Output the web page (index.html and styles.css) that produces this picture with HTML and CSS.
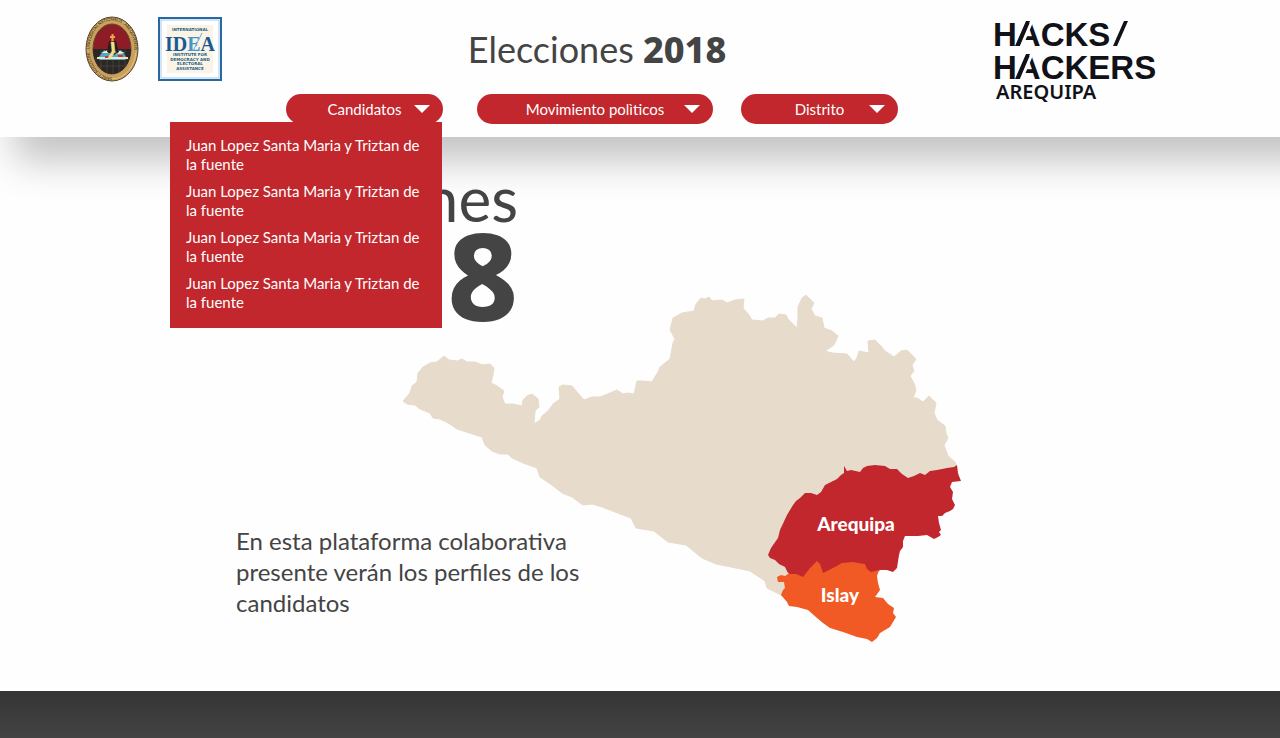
FILE: index.html
```html
<!DOCTYPE html>
<html lang="es">
<head>
<meta charset="utf-8">
<meta name="viewport" content="width=device-width, initial-scale=1">
<title>Elecciones 2018</title>
<link rel="stylesheet" href="styles.css">
</head>
<body>
<header class="site-header">
  <div class="partners">
    <svg class="seal" viewBox="0 0 54 66" role="img" aria-label="Universidad">
      <defs><path id="ring" d="M27 61.500A22.500 28.500 0 1 1 27.100 61.500"/></defs>
      <ellipse cx="27" cy="33" rx="26" ry="32" fill="#c9a15a" stroke="#5b4630"/>
      <ellipse cx="27" cy="33" rx="24" ry="30" fill="none" stroke="#e3c486"/>
      <text class="seal-text"><textPath href="#ring">SANCTI AUGUSTINI · UNIVERSITAS NATIONALIS · AREQUIPENSIS ·</textPath></text>
      <ellipse cx="27" cy="33" rx="19" ry="25" fill="#8e1c27" stroke="#5b4630"/>
      <path d="M8 33h38A19 25 0 0 1 8 33z" fill="#2a2827"/>
      <path d="M16 34v19M22 34v23M28 34v24M34 34v22M40 34v16M10 43h34M12 50h30" stroke="#514b46" stroke-width=".6"/>
      <path d="M13 42l6-8 6 3h5l6-3 6 8-2 2H15z" fill="#51a6ca"/>
      <path d="M12 41h31v2H12z" fill="#efe6bd"/>
      <path d="M16 37l7-3v3zM32 34l8 3-7 1z" fill="#f7f1d6"/>
      <path d="M20 40h5v2h-5zM33 39h5v2h-5z" fill="#c63434"/>
      <path d="M22 36l2-11h7l3 11-5 3z" fill="#24211f"/>
      <path d="M26 26h3l1 10-5 7-2-1 4-7zM30 35l2 4" fill="#f6dc84" stroke="#f6dc84" stroke-width=".5"/>
      <path d="M27.500 18v7M25 21h5" stroke="#f5a04a" stroke-width="2"/>
    </svg>
    <svg class="idea" viewBox="0 0 64 64" role="img" aria-label="International IDEA">
      <rect x="1" y="1" width="62" height="62" fill="#fff" stroke="#2768a3" stroke-width="2"/>
      <rect x="3" y="3" width="58" height="58" fill="none" stroke="#a9c9e2"/>
      <rect x="9" y="8" width="46" height="48" fill="#fbf4e6"/>
      <g class="idea-small">
        <text x="32" y="14">INTERNATIONAL</text>
        <text x="32" y="39">INSTITUTE FOR</text>
        <text x="32" y="44">DEMOCRACY AND</text>
        <text x="32" y="48">ELECTORAL</text>
        <text x="32" y="53">ASSISTANCE</text>
      </g>
      <text class="idea-name" x="32" y="34">ID<tspan fill="#4796c8">E</tspan>A</text>
      <path d="M35 34l9-18" stroke="#63acd4"/>
    </svg>
  </div>

  <div class="center">
    <h1 class="brand">Elecciones <strong>2018</strong></h1>
    <nav class="filters" aria-label="Filtros">
      <div class="filter">
        <button class="pill" type="button" aria-haspopup="true" aria-expanded="true" aria-controls="candidatos"><span class="pill-label">Candidatos</span><svg class="caret" viewBox="0 0 16 8" aria-hidden="true"><path d="M0 0h16L8 8z"/></svg></button>
        <ul class="menu" id="candidatos">
          <li><a href="#">Juan Lopez Santa Maria y Triztan de la fuente</a></li>
          <li><a href="#">Juan Lopez Santa Maria y Triztan de la fuente</a></li>
          <li><a href="#">Juan Lopez Santa Maria y Triztan de la fuente</a></li>
          <li><a href="#">Juan Lopez Santa Maria y Triztan de la fuente</a></li>
        </ul>
      </div>
      <button class="pill pill-wide" type="button" aria-haspopup="true"><span class="pill-label">Movimiento polìticos</span><svg class="caret" viewBox="0 0 16 8" aria-hidden="true"><path d="M0 0h16L8 8z"/></svg></button>
      <button class="pill" type="button" aria-haspopup="true"><span class="pill-label">Distrito</span><svg class="caret" viewBox="0 0 16 8" aria-hidden="true"><path d="M0 0h16L8 8z"/></svg></button>
    </nav>
  </div>

  <svg class="hacks" viewBox="0 0 166 90" role="img" aria-label="Hacks/Hackers Arequipa">
    <g class="hacks-name">
      <text x="-1" y="30">HACKS</text>
      <text x="-1" y="63">HACKERS</text>
    </g>
    <path d="M27 31L38 5M27 64L38 38" stroke="#fefefe" stroke-width="3"/>
    <path d="M21 30L32 5h4L25 30zM21 63L32 38h4L25 63zM119 30L130 5h4L123 30z" fill="#111118"/>
    <text class="hacks-city" x="2" y="83">AREQUIPA</text>
  </svg>
</header>

<main class="hero">
  <svg class="map" viewBox="403 294 558 348" role="img" aria-label="Mapa de Arequipa">
    <path fill="#e7dccb" stroke="#e7dccb" stroke-linejoin="round" d="M403 401L410 393 412 386 417 382 418 373 423 367 430 363 437 362 444 356 449 360 457 361 462 359 467 362 475 362 483 365 490 364 494 368 493 375 491 383 497 386 504 391 502 397 505 404 513 404 522 406 523 400 527 396 532 394 538 399 539 407 535 411 534 424 540 420 542 416 548 411 553 404 560 399 559 387 563 385 572 386 577 392 584 400 592 397 600 397 610 393 617 390 623 394 628 393 634 394 637 381 643 381 652 382 658 372 660 367 670 359 673 343 675 339 670 330 673 318 682 313 694 311 696 304 701 298 705 299 709 297 712 301 722 300 727 303 735 300 744 299 743 308 749 315 752 320 763 321 768 318 775 318 779 314 786 315 788 319 797 328 798 318 798 307 802 298 806 295 814 303 811 309 815 316 822 318 824 328 832 331 838 336 834 345 825 351 832 353 847 354 854 362 857 358 859 351 869 353 868 341 875 340 881 346 885 351 894 357 901 351 907 350 916 359 912 365 914 371 910 376 914 383 916 390 913 398 917 398 923 402 929 396 936 403 934 413 937 420 945 426 946 433 948 438 944 445 948 456 955 462 957 468 890 520 800 575 785 597 781 595 767 588 765 581 750 571 741 569 716 564 702 558 686 545 668 542 654 531 636 528 631 518 615 512 602 507 592 504 583 505 572 497 562 493 552 485 540 477 537 468 523 463 512 458 508 454 500 454 492 451 485 445 482 437 457 429 450 424 440 419 433 418 430 413 420 409 415 405 407 404z"/>
    <path fill="#c1272d" d="M844 466L847 471 851 470 860 472 863 468 867 466 875 465 885 466 890 469 897 469 902 474 908 478 914 476 920 473 925 475 930 471 937 470 947 468 954 467 957 465 958 473 959 476 961 481 952 482 950 487 953 492 952 499 955 505 953 509 950 511 945 513 942 516 938 516 939 523 941 530 939 532 941 535 938 537 934 539 927 535 918 536 905 536 903 541 903 547 900 551 899 555 897 568 893 572 887 570 880 570 871 578 803 583 788 573 785 567 779 564 775 560 770 558 768 555 771 548 778 538 780 530 787 515 793 505 796 501 800 498 805 493 811 493 817 495 821 492 825 485 831 482 837 479 841 475 844 473z"/>
    <path fill="#f15a24" d="M777 577L781 575 785 576 788 574 796 574 803 577 810 568 817 561 820 564 823 573 829 570 835 567 842 563 853 562 858 563 865 564 867 569 871 572 879 570 877 576 878 583 880 590 875 597 883 598 888 604 894 608 893 613 896 617 893 622 890 627 880 633 877 638 872 642 867 639 857 637 843 632 830 628 823 623 817 618 808 610 797 607 789 606 787 602 781 595 783 590 785 588 784 582 778 582z"/>
    <g class="map-labels">
      <text x="856" y="531">Arequipa</text>
      <text x="840" y="602">Islay</text>
    </g>
  </svg>
  <div class="intro">
    <h2 class="intro-title">Elecciones <strong>2018</strong></h2>
    <p class="intro-text">En esta plataforma colaborativa presente verán los perfiles de los candidatos</p>
  </div>
</main>

<footer class="site-footer"></footer>
</body>
</html>
```
FILE: styles.css
```css
:root {
  --red: #c1272d;
  --ink: #444;
}

* {
  box-sizing: border-box;
}

body {
  display: flex;
  flex-direction: column;
  min-height: 100vh;
  margin: 0;
  background: #fefefe;
  color: var(--ink);
  font-family: Lato, "Noto Sans", sans-serif;
  overflow-x: hidden;
}

.site-header {
  position: relative;
  z-index: 1;
  display: flex;
  justify-content: space-between;
  align-items: flex-start;
  padding: 16px 120px 13px 85px;
  background: #fefefe;
  box-shadow: 30px 8px 36px 16px rgba(0, 0, 0, .23);
}

.partners {
  display: flex;
  gap: 19px;
}

.seal {
  width: 54px;
  height: 66px;
}

.idea {
  width: 64px;
  height: 64px;
  margin-top: 1px;
}

.seal-text {
  font-size: 4px;
  font-weight: 700;
  fill: #4d3a22;
}

.idea-small {
  font-family: "DejaVu Sans", sans-serif;
  font-size: 4px;
  font-weight: 700;
  text-anchor: middle;
  fill: #245e80;
}

.idea-name {
  font-family: "Liberation Serif", serif;
  font-size: 20px;
  font-weight: 700;
  text-anchor: middle;
  fill: #175a94;
}

.center {
  margin-right: 32px;
}

.brand {
  margin: 11px 0 22px;
  padding-left: 10px;
  font-size: 36px;
  line-height: 44px;
  font-weight: 400;
  text-align: center;
}

.brand strong,
.intro-title strong {
  font-family: "Noto Sans", sans-serif;
  font-weight: 800;
}

.filters {
  display: grid;
  grid-template-columns: 163px auto auto;
  gap: 28px;
}

.filter {
  position: relative;
}

.pill {
  display: grid;
  grid-template-columns: 1fr auto 1fr;
  align-items: center;
  width: 157px;
  height: 30px;
  padding: 0 13px;
  border: 0;
  border-radius: 15px;
  background: var(--red);
  color: #fff;
  font: inherit;
  font-size: 15px;
  line-height: 20px;
  cursor: pointer;
}

.pill-wide {
  width: 236px;
}

.pill-label {
  grid-column: 2;
}

.caret {
  justify-self: end;
  width: 16px;
  height: 8px;
  fill: #fff;
}

.menu {
  position: absolute;
  top: 28px;
  right: 7px;
  display: grid;
  gap: 8px;
  width: 272px;
  margin: 0;
  padding: 14px 16px 16px;
  background: var(--red);
  list-style: none;
  font-size: 15px;
  line-height: 19px;
}

.menu a {
  display: block;
  color: #fff;
  text-decoration: none;
}

.hacks {
  width: 166px;
  height: 90px;
}

.hacks-name {
  font-family: "Liberation Sans", sans-serif;
  font-size: 33px;
  font-weight: 700;
  fill: #111118;
}

.hacks-city {
  font-family: "Noto Sans", sans-serif;
  font-size: 20px;
  font-weight: 600;
  fill: #111118;
}

.hero {
  display: grid;
  flex: 1;
  align-content: start;
  width: 100%;
  max-width: 808px;
  margin: 0 auto;
  padding: 31px 0 48px;
}

.map,
.intro {
  grid-area: 1 / 1;
}

.map {
  width: 558px;
  max-width: 100%;
  margin: 126px 0 0 167px;
}

.intro {
  max-width: 360px;
}

.intro-title {
  display: flex;
  flex-direction: column;
  align-items: flex-end;
  width: 282px;
  margin: 0;
  font-size: 62px;
  line-height: 60px;
  font-weight: 400;
}

.intro-title strong {
  font-size: 122px;
  line-height: 92px;
}

.intro-text {
  margin: 205px 0 0;
  font-size: 24px;
  line-height: 31px;
}

.map-labels {
  font-size: 19px;
  font-weight: 900;
  text-anchor: middle;
  fill: #fff;
}

.site-footer {
  min-height: 47px;
  background: linear-gradient(#353535, #434343);
}
```
